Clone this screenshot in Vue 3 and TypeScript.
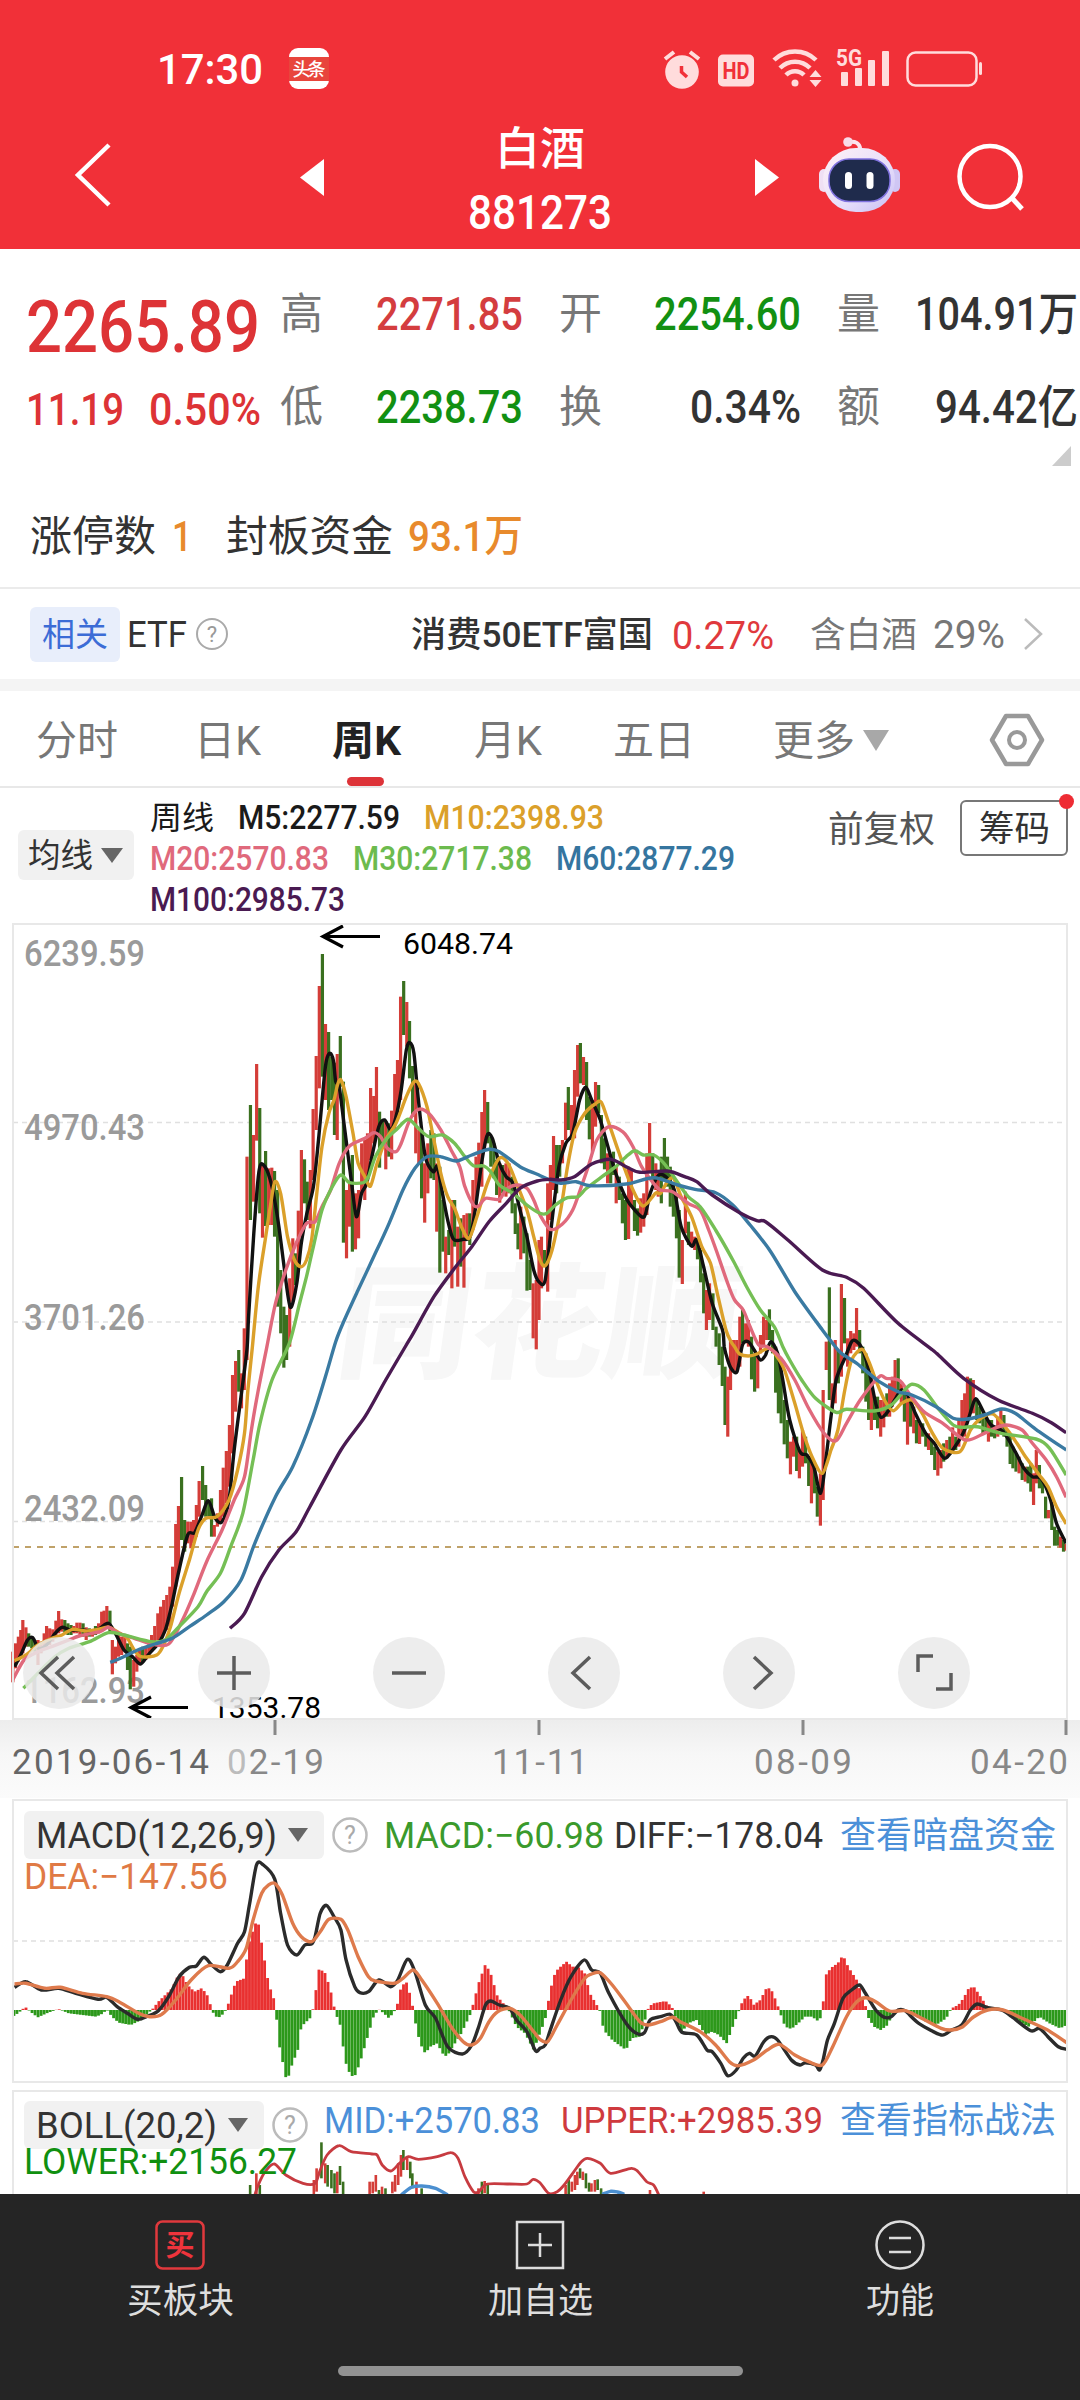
<script setup lang="ts">
/**
 * Sector quote page: header, quote summary, weekly K-line chart with
 * moving averages, MACD / BOLL sub charts and the bottom action bar.
 */
import { h } from 'vue'

interface FitProps {
  t: string
  w: number
  s: number
  b?: number
}

/* ── Single line of text condensed to a given width ────── */
const FitText = (p: FitProps) =>
  h('svg', { width: p.w, height: p.s, style: { overflow: 'visible', flex: 'none', display: 'block' } }, [
    h('text', {
      x: 0,
      y: p.s * 0.86,
      fill: 'currentColor',
      'font-size': p.s,
      'font-weight': p.b ?? 400,
      textLength: p.w,
      lengthAdjust: 'spacingAndGlyphs',
    }, p.t),
  ])
FitText.props = ['t', 'w', 's', 'b']

/* ── Chart data, stored per tile at roughly 3x density ─── */
type Pt = [number, number]
type Tile = [number, number]
const SX = 2.904
const SY = 3
const A: Tile = [0, 900]
const B: Tile = [540, 900]
const C: Tile = [0, 1340]
const D: Tile = [540, 1340]
const E: Tile = [0, 1780]
const F: Tile = [540, 1780]

function pts([ox, oy]: Tile, s: string): Pt[] {
  return s.trim().split(/\s+/).map((p) => {
    const [x, y] = p.split(',').map(Number)
    return [ox + x / SX, oy + y / SY]
  })
}

/* Catmull-Rom through all the points, as cubic segments */
function smooth(p: Pt[]): string {
  const f = (n: number) => n.toFixed(1)
  let d = `M${f(p[0][0])} ${f(p[0][1])}`
  for (let i = 0; i < p.length - 1; i++) {
    const a = p[i - 1] ?? p[i]
    const b = p[i]
    const c = p[i + 1]
    const e = p[i + 2] ?? c
    d += `C${f(b[0] + (c[0] - a[0]) / 7)} ${f(b[1] + (c[1] - a[1]) / 7)} ${f(c[0] - (e[0] - b[0]) / 7)} ${f(c[1] - (e[1] - b[1]) / 7)} ${f(c[0])} ${f(c[1])}`
  }
  return d
}

/* "x,high,low" with a trailing g for a falling week */
function bars([ox, oy]: Tile, s: string) {
  return s.trim().split(/\s+/).map((p) => {
    const [x, hi, lo] = p.replace('g', '').split(',').map(Number)
    return { x: ox + x / SX - 1.5, y: oy + hi / SY, h: (lo - hi) / SY, up: !p.endsWith('g') }
  })
}

const candles = [
  ...bars(C, `37,935,1027 45,910,985 53,890,965 60,870,950 66,840,940 75,862,920 83,880,920g 92,890,925g 101,900,935g 110,900,975 119,905,940 128,880,930 135,858,920
    144,865,915 153,868,905 162,842,890 170,813,880 179,838,875 188,840,878g 197,850,885g 206,855,885g 214,858,880 223,848,880 232,848,885 241,850,890g 250,862,900 259,865,890g
    268,870,890 277,858,885g 286,850,880 295,815,872 302,812,870 310,798,865 319,812,880g 326,900,1003 335,920,970 344,880,950 353,890,945 362,890,930 370,910,990g 378,920,1048g
    388,960,1040 397,945,995 405,930,970 414,920,968g 423,920,960 432,905,950 440,885,935 449,858,920 458,820,900 466,800,895 475,780,880 484,765,870 493,740,860 501,680,800
    510,552,740 518,498,700 527,411,600g 536,540,635g 545,545,610 554,545,625 562,540,610 570,495,590 578,423,530 588,378,480g 597,435,530g 606,480,530g 614,475,590g 622,555,590
    631,520,560 640,450,545 648,383,530 657,333,490 666,255,440 675,105,340 684,63,215 693,30,155g 701,100,205 709,-35,150`),
  ...bars(A, `717,770,1380 727,615,960g 736,705,905 745,492,722 754,624,940g 762,790,1013 771,753,978g 780,805,975 789,803,975 797,813,1010g 806,870,1220g 815,1110,1300g
    824,1220,1403g 832,1245,1380g 841,1135,1340 850,1015,1205 858,1060,1155g 866,932,1100 875,750,1000 884,778,910g 892,845,960g 901,810,985 909,627,840 918,468,690 927,258,565
    936,162,530g 945,372,600 954,396,630g 963,470,600g 971,488,705g 979,462,720 988,408,560g 997,545,1028g 1006,870,1075 1015,850,980 1023,765,1055g 1032,880,1048 1041,870,1015
    1050,730,880 1059,720,900 1067,700,830 1076,564,780 1085,588,730 1093,501,710 1102,635,803g 1111,660,740g 1120,665,808 1129,670,770g 1137,632,778 1146,522,690 1154,480,640
    1163,290,600 1172,243,405g 1181,306,440 1189,363,535g 1198,498,650g 1207,545,760 1216,690,790 1224,700,895g 1233,790,968 1242,730,880 1251,690,835g 1260,700,840g 1268,790,995
    1277,800,1118g 1286,900,1055g 1294,1010,1120 1303,990,1065g 1312,900,1165 1320,900,1040g 1329,980,1160 1338,955,1100g 1347,945,1163 1356,940,1020 1364,940,1035g 1373,840,990
    1382,770,920 1390,728,860 1399,636,860 1407,570,750 1416,606,730g 1425,710,800g 1434,730,835g 1442,780,885g 1451,790,908 1460,795,880g 1469,790,890 1478,790,880 1487,830,940g
    1496,910,1002g 1504,970,1048g 1512,920,1078 1521,950,1060g 1530,1000,1172g 1539,1080,1170g 1548,1150,1315 1557,1140,1348 1565,1020,1260`),
  ...bars(B, `4,1010,1165 13,1050,1100g 22,850,1175 30,795,960 39,708,870 48,735,880g 57,735,830g 65,720,790 74,608,720 82,561,690g 91,615,720 100,510,715 109,435,590 117,429,550g
    126,471,555 135,486,660g 143,590,718g 152,600,757 161,546,680 170,555,640g 178,645,790g 187,715,808g 196,760,850 205,775,850g 213,755,825g 221,800,910 230,830,900g 239,880,970g
    248,900,1020g 257,800,1017 265,810,920 274,900,993g 283,925,1007g 292,895,998 301,880,980 310,760,945 318,669,820 327,760,850g 336,790,870 343,815,890 352,770,910g 361,714,840g
    370,770,860g 378,800,920g 387,850,950g 396,880,1015g 404,930,1133g 413,1020,1152 422,875,1000 431,965,1035g 440,995,1040 449,1010,1050 457,1020,1078g 466,1050,1147g
    475,1120,1240g 483,1170,1290 492,1150,1260 502,1180,1290g 511,1280,1340g 520,1300,1395g 529,1340,1458g 537,1400,1575g 545,1430,1610 553,1320,1470 562,1320,1410 571,1320,1415
    580,1250,1400 588,1228,1330g 597,1270,1330 605,1260,1340 614,1310,1438g 623,1360,1475g 632,1360,1465 640,1305,1360 649,1250,1340 658,1260,1320 666,1228,1320g 675,1290,1360g
    684,1340,1478g 692,1380,1540g 700,1420,1570g 709,1500,1633g 718,1560,1675g 727,1625,1723 736,1610,1670 745,1610,1713g 753,1650,1735 762,1590,1700 771,1610,1690g 780,1670,1758g
    788,1690,1810 797,1700,1780g 805,1760,1850g 814,1720,1877 822,1470,1800 831,1325,1410 840,1162,1500g 848,1450,1530 857,1320,1510 866,1350,1450g 875,1152,1430 884,1194,1330g
    893,1315,1400 902,1293,1360 911,1300,1350 919,1224,1340 928,1290,1360g 937,1340,1420g 946,1360,1505g 954,1420,1560g 962,1430,1590 971,1490,1560g 980,1490,1585g 989,1500,1610
    998,1500,1582 1007,1480,1550g 1015,1450,1550 1023,1430,1520 1031,1380,1500 1040,1375,1470g 1049,1450,1510 1058,1470,1565g 1067,1490,1634 1076,1500,1580g 1085,1520,1600
    1093,1560,1630g 1102,1570,1632 1111,1570,1610g 1120,1600,1640g 1128,1600,1650 1137,1620,1665g 1146,1640,1710g 1155,1655,1727 1164,1650,1705 1172,1630,1685g 1181,1620,1675
    1190,1610,1650g 1198,1582,1650 1207,1610,1650g 1216,1560,1640 1225,1500,1620 1233,1480,1610 1241,1430,1570 1250,1435,1540g 1258,1440,1540 1268,1500,1560g 1277,1520,1570g
    1286,1540,1600g 1295,1550,1600g 1302,1560,1625 1311,1560,1610g 1320,1580,1615g 1329,1550,1610 1338,1525,1590 1347,1545,1610g 1356,1590,1640g 1365,1600,1692g 1373,1640,1705g
    1382,1660,1715g 1391,1670,1720 1400,1690,1740g 1409,1700,1745 1417,1700,1750g 1425,1690,1775g 1433,1720,1815 1441,1650,1750 1450,1695,1765g 1459,1740,1780g 1468,1790,1855g
    1476,1830,1855 1486,1810,1890g 1494,1880,1937g 1503,1890,1937g 1511,1910,1943 1520,1920,1955g 1528,1932,1952`),
]

const averages = [
  {
    color: '#111111',
    d: smooth([
      ...pts(C, '42,980 60,945 80,900 95,893 112,925 135,915 160,880 180,862 205,870 240,870 265,875 290,865 315,850 335,880 360,930 385,950 408,972 430,945 460,910 480,870 500,790 520,690 545,585 565,578 585,530 605,482 625,535 645,545 665,480 680,330 700,170 717,30'),
      ...pts(A, '722,1250 737,1000 750,830 758,792 775,810 792,870 810,980 825,1100 843,1222 862,1150 875,1030 890,945 910,860 925,720 945,500 957,460 968,480 975,545 985,560 1000,680 1020,840 1035,950 1050,880 1065,850 1080,770 1100,680 1117,660 1135,690 1150,650 1165,570 1180,450 1190,428 1202,460 1215,600 1235,770 1258,815 1270,800 1285,880 1300,960 1317,1018 1345,1018 1365,1010 1380,930 1400,780 1415,705 1430,715 1450,790 1470,830 1490,850 1510,930 1530,1010 1550,1110 1565,1145'),
      ...pts(B, '15,1140 35,960 55,800 75,730 95,700 115,600 133,562 150,600 175,660 200,750 220,820 250,895 275,930 303,950 320,880 345,825 370,835 390,870 410,980 440,1038 455,1020 475,1100 500,1210 530,1290 535,1340'),
      ...pts(D, '545,60 555,85 572,95 588,15 605,5 622,30 640,60 655,45 670,5 690,40 705,120 725,240 755,335 775,345 795,380 815,460 830,360 845,230 860,120 885,55 905,5 918,3 935,25 955,90 975,190 990,232 1010,215 1030,180 1050,150 1070,170 1090,220 1120,280 1145,310 1175,355 1205,320 1235,265 1260,185 1270,180 1290,220 1310,255 1345,275 1380,335 1405,385 1430,410 1455,415 1480,470 1500,550 1528,610'),
    ]),
  },
  {
    color: '#dba02a',
    d: smooth([
      ...pts(C, '42,962 75,945 110,915 150,895 180,885 210,868 250,873 285,868 315,862 345,878 370,895 390,930 410,950 455,945 475,915 495,860 520,760 550,660 575,570 597,535 630,530 665,480 690,390 710,280 720,150 733,20'),
      ...pts(A, '750,1160 770,1020 785,920 798,845 815,880 835,1010 855,1080 875,1100 890,1080 905,1020 920,880 935,740 955,640 970,600 980,555 990,540 1005,590 1025,700 1040,790 1060,830 1076,858 1095,790 1120,720 1150,670 1180,590 1200,548 1215,550 1240,620 1260,720 1280,820 1300,890 1320,925 1340,980 1362,1015 1385,950 1415,850 1450,775 1475,790 1500,850 1530,930 1550,1010'),
      ...pts(B, '0,1080 15,1097 35,1050 60,930 80,800 100,700 130,640 160,612 178,607 200,670 230,760 270,870 300,918 335,880 350,880 370,845 388,835 410,890 440,950 470,1040 495,1090 515,1180 540,1290 555,1325'),
      ...pts(D, '565,20 580,42 605,48 630,42 650,30 668,25 685,45 710,90 740,190 765,280 790,350 820,400 845,330 865,270 885,150 905,60 935,28 955,65 975,120 1000,180 1025,212 1050,190 1080,180 1110,220 1140,280 1170,325 1220,335 1250,270 1280,235 1315,222 1350,260 1385,310 1410,350 1450,405 1475,440 1500,500 1528,552'),
    ]),
  },
  {
    color: '#e0697c',
    d: smooth([
      ...pts(C, '37,1020 70,960 110,935 150,920 200,900 230,888 290,875 315,862 345,880 390,895 440,912 490,912 530,840 560,770 600,665 645,570 680,480 710,410 730,270 750,150 775,20'),
      ...pts(A, '800,1210 830,1110 860,1030 890,970 915,965 935,920 960,870 985,790 1015,738 1060,715 1085,698 1105,710 1125,745 1150,755 1165,730 1190,660 1215,628 1245,640 1280,690 1310,750 1335,800 1350,860 1375,915 1390,918 1410,895 1450,898 1470,868 1500,855 1530,865 1550,900'),
      ...pts(B, '0,945 30,988 65,972 95,930 120,860 140,800 165,720 200,680 240,695 270,740 295,800 330,850 350,870 385,875 430,910 465,930 490,990 515,1060 545,1150 565,1200 590,1230 610,1280 635,1335'),
      ...pts(D, '660,20 700,55 740,120 780,205 825,280 860,302 890,250 930,180 985,110 1005,115 1045,122 1075,165 1115,215 1170,250 1235,300 1290,280 1320,265 1355,255 1400,270 1430,310 1470,360 1500,410 1528,472'),
    ]),
  },
  {
    color: '#75bf55',
    d: smooth([
      ...pts(C, '68,1045 110,1000 160,950 200,925 260,905 315,878 360,885 440,905 480,900 520,860 575,800 600,755 640,700 670,620 705,520 735,360 755,250 790,120 840,10'),
      ...pts(A, '870,1210 890,1130 910,1040 935,930 965,860 990,825 1015,848 1055,848 1070,830 1090,770 1120,720 1150,690 1185,658 1215,685 1245,710 1285,705 1320,730 1350,770 1375,797 1405,798 1425,815 1450,855 1490,880 1530,915'),
      ...pts(B, '0,940 20,940 45,915 80,893 110,890 135,865 180,830 220,800 250,770 275,752 300,765 330,765 360,790 395,840 430,890 465,920 510,990 560,1080 600,1160 640,1230 680,1280 705,1340'),
      ...pts(D, '725,60 760,120 800,175 860,217 890,208 970,213 1020,195 1055,155 1080,133 1115,150 1160,210 1200,255 1225,262 1270,260 1340,280 1440,297 1480,325 1528,405'),
    ]),
  },
  {
    color: '#3a7aa2',
    d: smooth([
      ...pts(C, '320,967 350,955 400,930 450,912 500,895 550,860 600,825 650,785 700,720 740,610 800,470 850,380 905,240 945,110 975,5'),
      ...pts(A, '1000,1260 1040,1170 1090,1060 1130,970 1170,870 1205,805 1240,770 1280,770 1325,783 1370,765 1420,748 1450,755 1510,800 1560,823'),
      ...pts(B, '30,840 60,850 105,845 145,857 250,852 330,833 400,855 450,868 510,878 560,915 610,975 670,1055 740,1175 820,1290 850,1330'),
      ...pts(D, '875,40 920,70 985,125 1040,155 1080,165 1150,200 1200,235 1235,238 1290,225 1340,207 1380,220 1440,268 1528,330'),
    ]),
  },
  {
    color: '#4a1a52',
    d: smooth([
      ...pts(C, '668,865 710,820 760,710 810,630 860,575 900,500 990,330 1060,230 1120,120 1180,15'),
      ...pts(A, '1200,1300 1260,1190 1320,1105 1370,1040 1420,965 1470,910 1510,865 1560,843'),
      ...pts(B, '30,838 60,840 100,830 150,792 205,778 250,800 290,817 370,813 420,830 455,845 500,885 580,938 630,962 655,965 720,1020 820,1110 890,1132 940,1165 1040,1270 1140,1350'),
      ...pts(D, '1160,48 1230,115 1330,180 1430,220 1480,245 1528,278'),
    ]),
  },
]

/* ── MACD ──────────────────────────────────────────────── */
const ZERO = 2010
const hist = [
  ...pts(E, '37,-20 55,-8 66,3 75,8 88,-5 110,-22 140,-8 170,3 200,-10 240,-15 280,-20 300,-10 310,2 325,-20 345,-38 380,-45 410,-30 435,-5 445,5 460,25 480,45 500,65 520,110 530,105 545,75 565,55 585,65 600,50 610,20 617,-5 632,-25 645,-15 658,2 670,40 685,85 710,95 720,190 735,240 748,275 765,170 780,80 795,35 803,-20 808,-90 820,-150 833,-217 848,-165 865,-120 875,-50 905,-20 912,20 927,125 945,110 960,60 968,20 975,-10 990,-50 1000,-140 1010,-180 1028,-205 1045,-160 1065,-90 1085,-20 1100,2 1115,-10 1130,-25 1145,-5 1155,20 1165,70 1180,85 1190,50 1200,5 1207,-40 1220,-100 1235,-130 1250,-110 1270,-100 1285,-130 1298,-140 1315,-110 1340,-70 1365,-15 1375,20 1390,80 1410,138 1425,110 1445,40 1470,10 1480,-5 1500,-50 1525,-70 1550,-120'),
  ...pts(F, '0,-70 15,-30 22,10 30,60 45,115 60,130 77,145 95,130 110,130 130,110 145,50 165,15 175,-5 185,-60 210,-90 250,-120 265,-85 290,-80 308,-20 316,10 330,20 365,27 383,10 390,-10 410,-70 430,-40 455,-30 480,-75 500,-65 520,-75 542,-100 560,-50 575,-10 582,10 590,30 607,45 620,15 640,30 660,70 675,55 690,15 698,-10 712,-50 730,-57 750,-40 770,-20 790,-20 810,-35 820,-10 824,40 832,110 850,130 865,140 880,165 895,130 920,90 945,15 952,-20 970,-50 990,-60 1010,-45 1025,-10 1040,5 1060,-5 1090,-15 1120,-35 1150,-45 1180,-25 1195,5 1215,15 1230,35 1245,65 1260,70 1280,40 1300,8 1320,3 1340,2 1355,-10 1380,-30 1420,-50 1450,-20 1480,-40 1510,-55 1530,-45'),
].map(([x, y]) => [x, y - 1780] as Pt)

const macdBars: { x: number; v: number }[] = []
for (let x = 14; x < 1066; x += 3.02) {
  const i = hist.findIndex((p) => p[0] >= x)
  if (i < 0) break
  const b = hist[i]
  const a = hist[i - 1] ?? b
  const k = b[0] === a[0] ? 0 : (x - a[0]) / (b[0] - a[0])
  macdBars.push({ x, v: a[1] + (b[1] - a[1]) * k })
}

const diffLine = smooth([
  ...pts(E, '42,622 75,605 120,630 170,625 220,640 285,658 310,652 340,680 370,700 400,718 430,708 460,692 490,650 520,590 550,562 570,558 592,532 615,555 640,575 660,555 690,490 710,455 725,370 745,255 765,255 798,298 815,400 835,495 862,525 885,495 905,492 915,470 930,400 948,376 970,410 990,450 1005,540 1030,620 1045,638 1070,635 1100,600 1135,620 1155,600 1183,538 1205,575 1235,675 1265,715 1300,800 1343,822 1370,795 1390,740 1410,675 1425,663 1450,675 1480,685 1500,720 1530,755 1555,812'),
  ...pts(F, '0,805 15,795 30,750 60,660 90,590 128,540 150,570 175,580 200,640 250,730 280,760 303,758 320,720 350,710 378,703 395,725 412,757 455,765 485,810 500,815 525,850 545,887 570,870 590,835 608,820 625,828 650,785 670,770 690,780 730,840 755,855 770,848 800,855 812,870 822,840 835,780 855,730 880,655 905,630 928,615 945,640 975,690 1000,712 1020,710 1040,690 1060,692 1100,730 1165,765 1195,750 1225,735 1250,690 1270,672 1300,683 1340,690 1370,710 1425,752 1450,745 1475,770 1505,800 1530,808'),
])
const deaLine = smooth([
  ...pts(E, '42,612 75,610 130,625 175,622 240,640 310,650 350,668 400,698 435,710 470,703 510,660 555,600 605,557 665,565 690,545 715,505 735,420 760,340 780,315 798,310 820,345 850,430 875,470 905,485 930,455 955,418 990,418 1010,450 1040,530 1070,590 1090,603 1145,610 1170,595 1200,570 1225,600 1270,670 1310,740 1345,785 1370,795 1395,775 1420,725 1445,695 1480,685 1510,705 1550,755'),
  ...pts(F, '0,778 22,785 50,735 90,660 130,595 150,582 175,578 210,615 250,670 290,725 315,735 350,725 385,712 410,727 465,755 510,795 550,845 575,857 620,840 660,810 695,793 740,825 780,845 820,855 850,800 890,710 920,665 945,653 975,665 1015,693 1060,692 1100,710 1165,745 1195,750 1225,742 1260,710 1300,690 1345,690 1400,715 1470,748 1530,788'),
])

/* ── BOLL ──────────────────────────────────────────────── */
const bollUpper = smooth([
  ...pts(E, '740,1245 750,1215 770,1175 797,1152 830,1185 880,1210 915,1210 930,1170 950,1125 985,1097 1020,1115 1080,1122 1095,1125 1110,1155 1135,1173 1160,1150 1185,1130 1215,1138 1270,1130 1310,1118 1330,1135 1350,1190 1375,1235 1390,1235 1415,1212 1480,1212 1530,1212 1548,1198'),
  ...pts(F, '0,1208 25,1240 50,1235 70,1215 95,1180 120,1145 138,1135 175,1150 205,1180 265,1165 285,1175 310,1205 330,1215 345,1245'),
])
const bollMid = [
  smooth(pts(E, '1165,1245 1195,1222 1225,1218 1265,1225 1300,1245')),
  smooth(pts(F, '180,1243 205,1234 225,1236 245,1243')),
]
const bollBars = [
  ...bars(E, `727,1215,1245g 745,1180,1245 755,1215,1245g 912,1200,1245 920,1165,1235 934,1087,1195g 945,1150,1210 952,1155,1220g 963,1170,1225g 972,1180,1240g 980,1175,1240
    988,1158,1215g 997,1205,1245g 1074,1205,1245 1083,1205,1240 1092,1185,1235 1101,1230,1245g 1110,1220,1245 1120,1225,1245g 1140,1205,1240 1148,1185,1235 1157,1150,1215
    1165,1125,1190 1172,1110,1170g 1183,1130,1170 1192,1145,1195g 1198,1180,1225g 1210,1205,1245 1225,1225,1245g 1390,1225,1245 1400,1205,1245g 1408,1203,1240 1417,1215,1245g`),
  ...bars(F, `75,1215,1245 84,1200,1245g 93,1205,1235 102,1185,1230 109,1175,1215 117,1165,1195g 125,1175,1200 134,1180,1225g 143,1208,1235g 150,1210,1235 160,1200,1235 168,1198,1230g 178,1225,1245g 320,1230,1245 476,1235,1245`),
]

/* ── Static rows ───────────────────────────────────────── */
const quotes = [
  { label: '高', value: '2271.85', w: 147, tone: 'up' },
  { label: '开', value: '2254.60', w: 147, tone: 'down' },
  { label: '量', value: '104.91万', w: 163, tone: 'flat' },
  { label: '低', value: '2238.73', w: 147, tone: 'down' },
  { label: '换', value: '0.34%', w: 111, tone: 'flat' },
  { label: '额', value: '94.42亿', w: 143, tone: 'flat' },
]
const yLabels = [
  { t: '6239.59', y: 966 },
  { t: '4970.43', y: 1140 },
  { t: '3701.26', y: 1330 },
  { t: '2432.09', y: 1521 },
  { t: '1162.93', y: 1703 },
]
const tools = [
  'M35 20L18 36L35 52M51 20L34 36L51 52',
  'M36 19V53M19 36H53',
  'M19 36H53',
  'M42 20L25 36L42 52',
  'M31 20L48 36L31 52',
  'M20 35V19H35M53 36V52H38',
]
</script>

<template>
  <div class="page">
    <header class="top">
      <div class="status">
        <FitText t="17:30" :w="106" :s="42" :b="500" />
        <svg class="app-icon" width="40" height="41" viewBox="0 0 40 41">
          <rect width="40" height="41" rx="9" fill="#fff" />
          <rect y="9" width="40" height="24" fill="#e8453c" />
          <text x="20" y="28" font-size="18" font-weight="500" fill="#fff" text-anchor="middle" textLength="33">头条</text>
        </svg>
        <svg class="status-icons" width="320" height="44" viewBox="662 47 320 44">
          <g fill="#ffdcdc">
            <circle cx="682" cy="72" r="16.800" />
            <path d="M665 59L674 52M699 59L690 52" stroke="#ffdcdc" stroke-width="4" />
            <path d="M681.500 66V72L687 77" fill="none" stroke="#f13038" stroke-width="3.500" />
            <rect x="718" y="54.500" width="36" height="32" rx="5" />
            <text x="736" y="79" font-size="23" font-weight="700" fill="#f13038" text-anchor="middle" textLength="27" lengthAdjust="spacingAndGlyphs">HD</text>
            <circle cx="795" cy="83" r="3.500" />
            <path d="M815.500 70L821.500 77H809.500ZM815.500 87L821.500 80H809.500Z" />
            <rect x="841" y="72" width="7" height="14" rx="1" />
            <rect x="855" y="68" width="7" height="18" rx="1" />
            <rect x="868" y="60" width="7" height="26" rx="1" />
            <rect x="882" y="51" width="7" height="35" rx="1" />
            <text x="836" y="66" font-size="23" font-weight="700" textLength="26" lengthAdjust="spacingAndGlyphs">5G</text>
            <rect x="979" y="62" width="3" height="13" rx="1.500" />
          </g>
          <g fill="none" stroke="#ffdcdc" stroke-width="4.500">
            <path d="M774 60A30 30 0 0 1 816 60" />
            <path d="M780 68A21 21 0 0 1 810 68" />
            <path d="M786 75A12.500 12.500 0 0 1 804 75" />
            <rect x="907.500" y="52.500" width="69" height="33" rx="8" stroke-width="2.500" />
          </g>
        </svg>
      </div>
      <div class="nav">
        <svg width="40" height="66" viewBox="0 0 40 66"><path d="M36 3L5 33L36 63" fill="none" stroke="#fff" stroke-width="4.500" /></svg>
        <svg class="prev" width="24" height="38" viewBox="0 0 24 38"><path d="M24 0V37L0 18.500Z" fill="#fff" /></svg>
        <div class="title">
          <FitText t="白酒" :w="90" :s="45" :b="500" />
          <FitText t="881273" :w="144" :s="48" :b="500" />
        </div>
        <svg class="next" width="24" height="38" viewBox="0 0 24 38"><path d="M0 0V37L24 18.500Z" fill="#fff" /></svg>
        <svg class="robot" width="84" height="78" viewBox="0 0 84 78">
          <defs>
            <linearGradient id="shell" x1="0" y1="0" x2="1" y2="1">
              <stop offset="0" stop-color="#fff2f6" />
              <stop offset="0.6" stop-color="#e6defa" />
              <stop offset="1" stop-color="#c6bdf4" />
            </linearGradient>
          </defs>
          <path d="M42 14C42 8 37 6 31 7" fill="none" stroke="#fbe4ee" stroke-width="4" stroke-linecap="round" />
          <circle cx="30" cy="7" r="4.800" fill="#f8dce8" />
          <rect x="1" y="34" width="10" height="23" rx="5" fill="#efe0f4" />
          <rect x="72" y="34" width="10" height="23" rx="5" fill="#cfc6f4" />
          <rect x="5" y="13" width="72" height="64" rx="33" fill="url(#shell)" />
          <rect x="11" y="24" width="61" height="42.500" rx="20" fill="#1f2b4c" stroke="#8173e0" stroke-width="1.500" />
          <rect x="27" y="37" width="7" height="17" rx="3.500" fill="#fff" />
          <rect x="48.500" y="37" width="7" height="17" rx="3.500" fill="#fff" />
        </svg>
        <svg class="search" width="72" height="74" viewBox="0 0 72 74">
          <circle cx="33" cy="38.500" r="30.500" fill="none" stroke="#fff" stroke-width="4.500" />
          <path d="M55 60L65 71" stroke="#fff" stroke-width="5" />
        </svg>
      </div>
    </header>

    <section class="quote">
      <div class="last">
        <FitText t="2265.89" :w="234" :s="73" :b="500" />
        <div class="change">
          <FitText t="11.19" :w="98" :s="45" :b="500" />
          <FitText t="0.50%" :w="112" :s="45" :b="500" />
        </div>
      </div>
      <div class="quote-grid">
        <div v-for="q in quotes" :key="q.label" class="cell">
          <FitText class="label" :t="q.label" :w="43" :s="43" />
          <FitText :class="q.tone" :t="q.value" :w="q.w" :s="46" :b="500" />
        </div>
      </div>
    </section>
    <div class="corner">
      <svg width="19" height="20" viewBox="0 0 19 20"><path d="M19 0V20H0Z" fill="#ccc" /></svg>
    </div>
    <div class="limit">
      <FitText t="涨停数" :w="126" :s="42" />
      <FitText class="orange one" t="1" :w="20" :s="43" :b="500" />
      <FitText class="fund" t="封板资金" :w="167" :s="42" />
      <FitText class="orange amount" t="93.1万" :w="115" :s="43" :b="500" />
    </div>

    <div class="etf">
      <span class="badge"><FitText t="相关" :w="66" :s="33" /></span>
      <FitText t="ETF" :w="60" :s="36" />
      <svg class="help" width="34" height="34" viewBox="0 0 34 34">
        <circle cx="17" cy="17" r="15" fill="none" stroke="#aaa" stroke-width="2" />
        <text x="17" y="25" font-size="22" fill="#999" text-anchor="middle">?</text>
      </svg>
      <FitText class="etf-name" t="消费50ETF富国" :w="242" :s="35" :b="500" />
      <FitText class="etf-rate" t="0.27%" :w="102" :s="39" />
      <FitText class="grey part" t="含白酒" :w="107" :s="35" />
      <FitText class="grey share" t="29%" :w="72" :s="38" />
      <svg class="more" width="20" height="34" viewBox="0 0 20 34"><path d="M2 2L18 17L2 32" fill="none" stroke="#bbb" stroke-width="2.500" /></svg>
    </div>

    <nav class="tabs">
      <FitText t="分时" :w="82" :s="41" />
      <FitText class="t2" t="日K" :w="67" :s="41" />
      <span class="active">
        <FitText t="周K" :w="69" :s="41" :b="700" />
        <i />
      </span>
      <FitText class="t4" t="月K" :w="68" :s="41" />
      <FitText class="t5" t="五日" :w="82" :s="41" />
      <FitText class="t6" t="更多" :w="82" :s="41" />
      <svg class="t7" width="26" height="22" viewBox="0 0 26 22"><path d="M0 1H26L13 22Z" fill="#a8a8a8" /></svg>
      <svg class="hex" width="56" height="54" viewBox="0 0 56 54">
        <path d="M17 3H39L53 27L39 51H17L3 27Z" fill="none" stroke="#999" stroke-width="4.500" stroke-linejoin="round" />
        <circle cx="28" cy="27" r="8" fill="none" stroke="#999" stroke-width="4" />
      </svg>
    </nav>

    <div class="ma">
      <span class="select">
        <FitText t="均线" :w="65" :s="33" />
        <svg width="22" height="15" viewBox="0 0 22 15"><path d="M0 0H22L11 15Z" fill="#666" /></svg>
      </span>
      <div class="legend">
        <div>
          <FitText class="dark" t="周线" :w="64" :s="32" />
          <FitText class="m5" t="M5:2277.59" :w="162" :s="33" :b="500" />
          <FitText class="m10" t="M10:2398.93" :w="180" :s="33" :b="500" />
        </div>
        <div>
          <FitText class="m20" t="M20:2570.83" :w="179" :s="33" :b="500" />
          <FitText class="m30" t="M30:2717.38" :w="179" :s="33" :b="500" />
          <FitText class="m60" t="M60:2877.29" :w="179" :s="33" :b="500" />
        </div>
        <div>
          <FitText class="m100" t="M100:2985.73" :w="195" :s="33" :b="500" />
        </div>
      </div>
      <FitText class="adjust" t="前复权" :w="107" :s="36" />
      <span class="chips"><FitText t="筹码" :w="71" :s="35" /><i /></span>
    </div>

    <div class="kline">
      <svg width="1080" height="799" viewBox="0 922 1080 799">
        <text class="mark" x="0" y="0" transform="translate(333 1368) skewX(-8)" textLength="400" lengthAdjust="spacingAndGlyphs">同花顺</text>
        <path d="M13 1122.500H1067M13 1322H1067M13 1521.500H1067" stroke="#e0e0e0" stroke-width="1.500" stroke-dasharray="5 4" />
        <path d="M13 1547H1067" stroke="#c0a269" stroke-width="2" stroke-dasharray="6 6" />
        <text v-for="l in yLabels" :key="l.t" class="axis" x="24" :y="l.y" textLength="121" lengthAdjust="spacingAndGlyphs">{{ l.t }}</text>
        <rect v-for="(c, i) in candles" :key="i" :x="c.x" :y="c.y" width="3.200" :height="c.h" :fill="c.up ? '#d43d38' : '#3a701f'" />
        <path v-for="m in averages" :key="m.color" :d="m.d" :stroke="m.color" class="line" />
        <g class="pointer">
          <path d="M380 936.500H323M343 926L323 936.500L343 947M188 1707.500H131M151 1697L131 1707.500L151 1718" />
          <text x="403" y="954" textLength="110" lengthAdjust="spacingAndGlyphs">6048.74</text>
          <text x="212" y="1718" textLength="109" lengthAdjust="spacingAndGlyphs">1353.78</text>
        </g>
        <rect x="13" y="924" width="1054" height="795" fill="none" stroke="#e8e8e8" stroke-width="2" />
      </svg>
      <div class="tools">
        <svg v-for="d in tools" :key="d" width="72" height="72" viewBox="0 0 72 72"><path :d="d" /></svg>
      </div>
    </div>

    <div class="dates">
      <svg width="1080" height="78" viewBox="0 1721 1080 78">
        <path d="M275 1721V1736M539 1721V1736M803 1721V1736M1066 1721V1736" stroke="#888" stroke-width="3" />
        <text x="12" y="1775" textLength="197" class="first">2019-06-14</text>
        <text x="227" y="1775" textLength="97"><tspan class="faded">0</tspan>2-19</text>
        <text x="492" y="1775" textLength="96">11-11</text>
        <text x="754" y="1775" textLength="98">08-09</text>
        <text x="970" y="1775" textLength="98">04-20</text>
      </svg>
    </div>

    <section class="sub macd">
      <svg class="plot" width="1080" height="286" viewBox="0 1798 1080 286">
        <path d="M13 1941H1067" stroke="#e0e0e0" stroke-width="1.500" stroke-dasharray="5 4" />
        <rect
          v-for="b in macdBars" :key="b.x" :x="b.x - 1.5" :y="b.v > 0 ? ZERO - b.v : ZERO" width="2.850"
          :height="Math.abs(b.v)" :fill="b.v > 0 ? '#e93030' : '#2c981a'"
        />
        <path :d="diffLine" class="line" stroke="#2b2b2b" />
        <path :d="deaLine" class="line" stroke="#de7a4c" />
        <rect x="13" y="1800" width="1054" height="282" fill="none" stroke="#e8e8e8" stroke-width="2" />
      </svg>
      <div class="row">
        <span class="select">
          <FitText t="MACD(12,26,9)" :w="241" :s="36" />
          <svg width="20" height="14" viewBox="0 0 20 14"><path d="M0 0H20L10 14Z" fill="#666" /></svg>
        </span>
        <svg class="help" width="36" height="36" viewBox="0 0 36 36">
          <circle cx="18" cy="18" r="16.500" fill="none" stroke="#bbb" stroke-width="2.500" />
          <text x="18" y="27" font-size="25" fill="#aaa" text-anchor="middle">?</text>
        </svg>
        <FitText class="macd-v" t="MACD:−60.98" :w="220" :s="36" />
        <FitText class="diff-v" t="DIFF:−178.04" :w="209" :s="36" />
        <FitText class="link" t="查看暗盘资金" :w="216" :s="36" />
      </div>
      <FitText class="second dea" t="DEA:−147.56" :w="204" :s="36" />
    </section>

    <section class="sub boll">
      <svg class="plot" width="1080" height="105" viewBox="0 2089 1080 105">
        <rect v-for="(c, i) in bollBars" :key="i" :x="c.x" :y="c.y" width="2.600" :height="c.h" :fill="c.up ? '#d43d38' : '#3a701f'" />
        <path v-for="d in bollMid" :key="d" :d="d" class="line" stroke="#4b8fd0" />
        <path :d="bollUpper" class="line thin" stroke="#c73b40" />
        <path d="M13 2200V2091H1067V2200" fill="none" stroke="#e8e8e8" stroke-width="2" />
      </svg>
      <div class="row">
        <span class="select">
          <FitText t="BOLL(20,2)" :w="181" :s="36" />
          <svg width="20" height="14" viewBox="0 0 20 14"><path d="M0 0H20L10 14Z" fill="#666" /></svg>
        </span>
        <svg class="help" width="36" height="36" viewBox="0 0 36 36">
          <circle cx="18" cy="18" r="16.500" fill="none" stroke="#bbb" stroke-width="2.500" />
          <text x="18" y="27" font-size="25" fill="#aaa" text-anchor="middle">?</text>
        </svg>
        <FitText class="mid-v" t="MID:+2570.83" :w="216" :s="36" />
        <FitText class="upper-v" t="UPPER:+2985.39" :w="262" :s="36" />
        <FitText class="link" t="查看指标战法" :w="216" :s="36" />
      </div>
      <FitText class="second lower" t="LOWER:+2156.27" :w="273" :s="36" />
    </section>

    <footer class="bottom">
      <div class="actions">
        <div class="action">
          <svg width="50" height="50" viewBox="0 0 50 50">
            <rect x="1.500" y="1.500" width="47" height="47" rx="6" fill="none" stroke="#e0393d" stroke-width="2.500" />
            <text x="25" y="36" font-size="29" font-weight="700" fill="#ee343c" text-anchor="middle">买</text>
          </svg>
          <FitText t="买板块" :w="107" :s="35" />
        </div>
        <div class="action">
          <svg width="50" height="50" viewBox="0 0 50 50" fill="none" stroke="#ddd" stroke-width="2.500">
            <path d="M2 2H48V48H2ZM25 13V37M13 25H37" />
          </svg>
          <FitText t="加自选" :w="105" :s="35" />
        </div>
        <div class="action">
          <svg width="50" height="50" viewBox="0 0 50 50" fill="none" stroke="#ddd" stroke-width="2.500">
            <circle cx="25" cy="25" r="23.500" />
            <path d="M14 18H36M14 32H36" />
          </svg>
          <FitText t="功能" :w="68" :s="35" />
        </div>
      </div>
      <div class="home" />
    </footer>
  </div>
</template>

<style>
body {
  margin: 0;
  background: #fff;
}
</style>

<style scoped>
.page {
  width: 1080px;
  height: 2400px;
  overflow: hidden;
  background: #fff;
  color: #333;
  font-family: Roboto, "Noto Sans CJK SC", sans-serif;
}
svg {
  display: block;
  flex: none;
}

/* header */
.top {
  height: 249px;
  background: #f13038;
  color: #fff;
}
.status {
  display: flex;
  align-items: center;
  box-sizing: border-box;
  height: 90px;
  padding: 47px 0 0 157px;
}
.app-icon {
  margin-left: 26px;
}
.status-icons {
  margin-left: 333px;
}
.nav {
  display: flex;
  align-items: center;
  height: 158px;
  padding-left: 73px;
}
.nav > svg {
  margin-top: 12px;
}
.nav .prev {
  margin: 18px 0 0 187px;
}
.title {
  display: flex;
  flex-direction: column;
  align-items: center;
  gap: 17px;
  width: 146px;
  margin: 24px 1px 0 143px;
}
.nav .next {
  margin: 18px 0 0 141px;
}
.nav .robot {
  margin: 9px 0 0 39px;
}
.nav .search {
  margin: 11px 0 0 55px;
}

/* quote */
.quote {
  display: flex;
  height: 197px;
}
.last {
  display: flex;
  flex-direction: column;
  gap: 24px;
  width: 254px;
  padding: 40px 0 0 26px;
  color: #dd3336;
}
.change {
  display: flex;
  justify-content: space-between;
  width: 235px;
}
.quote-grid {
  display: grid;
  grid-template-columns: 243px 242px 241px;
  grid-template-rows: 46px 46px;
  column-gap: 36px;
  row-gap: 47px;
  padding-top: 41px;
}
.cell {
  display: flex;
  align-items: center;
  justify-content: space-between;
}
.label {
  color: #777;
}
.up {
  color: #d43d3f;
}
.down {
  color: #129012;
}
.corner {
  display: flex;
  justify-content: flex-end;
  height: 20px;
  padding-right: 9px;
}
.limit {
  display: flex;
  align-items: center;
  box-sizing: border-box;
  height: 123px;
  padding: 18px 0 0 30px;
  border-bottom: 2px solid #ebebeb;
}
.orange {
  color: #e88a2c;
}
.one {
  margin-left: 16px;
}
.fund {
  margin-left: 34px;
}
.amount {
  margin-left: 15px;
}

/* etf */
.etf {
  display: flex;
  align-items: center;
  height: 90px;
  padding-left: 30px;
  border-bottom: 12px solid #f4f4f4;
}
.badge {
  display: flex;
  align-items: center;
  justify-content: center;
  width: 90px;
  height: 55px;
  margin-right: 7px;
  border-radius: 6px;
  background: #e8eefb;
  color: #3c6cd6;
}
.etf .help {
  margin-left: 8px;
}
.etf-name {
  margin-left: 182px;
}
.etf-rate {
  margin-left: 19px;
  color: #e0393d;
}
.grey {
  color: #777;
}
.part {
  margin-left: 36px;
}
.share {
  margin-left: 16px;
}
.more {
  margin-left: 18px;
}

/* tabs */
.tabs {
  display: flex;
  align-items: center;
  height: 95px;
  padding-left: 36px;
  border-bottom: 2px solid #e8e8e8;
  color: #777;
}
.tabs > * {
  margin-top: 3px;
}
.t2 {
  margin-left: 76px;
}
.active {
  position: relative;
  margin-left: 71px;
  color: #222;
}
.active i {
  position: absolute;
  left: 15px;
  top: 57px;
  width: 37px;
  height: 9px;
  border-radius: 5px;
  background: #dd3338;
}
.t4 {
  margin-left: 73px;
}
.t5 {
  margin-left: 71px;
}
.t6 {
  margin-left: 78px;
}
.t7 {
  margin-left: 8px;
}
.hex {
  margin-left: 100px;
}

/* moving averages */
.ma {
  display: flex;
  height: 134px;
}
.select {
  display: flex;
  align-items: center;
  justify-content: space-between;
  box-sizing: border-box;
  border-radius: 6px;
  background: #f1f1f1;
}
.ma .select {
  width: 116px;
  height: 50px;
  margin: 42px 0 0 18px;
  padding: 0 11px 0 10px;
}
.legend {
  display: flex;
  flex-direction: column;
  gap: 8px;
  width: 585px;
  margin: 13px 0 0 16px;
}
.legend > div {
  display: flex;
  gap: 24px;
}
.dark,
.m5 {
  color: #1a1a1a;
}
.m10 {
  color: #dba02a;
}
.m20 {
  color: #e0697c;
}
.m30 {
  color: #6cbb4e;
}
.m60 {
  color: #35759f;
}
.m100 {
  color: #4a1a52;
}
.adjust {
  margin: 23px 0 0 93px;
  color: #555;
}
.chips {
  position: relative;
  display: flex;
  align-items: center;
  justify-content: center;
  box-sizing: border-box;
  width: 108px;
  height: 56px;
  margin: 12px 0 0 25px;
  border: 2px solid #777;
  border-radius: 6px;
}
.chips i {
  position: absolute;
  top: -8px;
  right: -8px;
  width: 15px;
  height: 15px;
  border-radius: 50%;
  background: #ee2c34;
}

/* k-line */
.kline {
  position: relative;
  height: 798px;
}
.line {
  fill: none;
  stroke-width: 3.4;
  stroke-linejoin: round;
}
.thin {
  stroke-width: 2.8;
}
.mark {
  font-size: 124px;
  font-weight: 900;
  fill: #f7f7f7;
}
.axis {
  font-size: 37px;
  font-weight: 500;
  fill: #9a9a9a;
}
.pointer path {
  fill: none;
  stroke: #000;
  stroke-width: 3.2;
}
.pointer text {
  font-size: 30px;
  fill: #000;
}
.tools {
  position: absolute;
  left: 23px;
  top: 715px;
  display: flex;
  gap: 103px;
}
.tools svg {
  border-radius: 50%;
  background: rgba(234, 234, 234, 0.85);
}
.tools path {
  fill: none;
  stroke: #5c5c5c;
  stroke-width: 3.5;
}
.dates {
  height: 78px;
  background: linear-gradient(#ededed, #f7f7f7 45%, #fbfbfb);
}
.dates text {
  font-size: 35px;
  fill: #888;
}
.dates .first {
  fill: #666;
}
.dates .faded {
  fill: #bcbcbc;
}

/* sub charts */
.sub {
  position: relative;
  box-sizing: border-box;
}
.plot {
  position: absolute;
  left: 0;
  top: 0;
}
.macd {
  height: 291px;
}
.boll {
  height: 105px;
}
.row {
  position: relative;
  display: flex;
  align-items: center;
  height: 48px;
  padding: 13px 0 0 24px;
}
.boll .row {
  padding-top: 12px;
}
.sub .select {
  width: 300px;
  height: 48px;
  padding: 0 16px 0 12px;
}
.boll .select {
  width: 240px;
}
.sub .help {
  margin-left: 8px;
}
.macd-v {
  margin-left: 16px;
  color: #3a9a2c;
}
.diff-v {
  margin-left: 10px;
}
.link {
  margin-left: 17px;
  color: #4b90d9;
}
.mid-v {
  margin: -10px 0 0 16px;
  color: #4b90d9;
}
.upper-v {
  margin: -10px 0 0 21px;
  color: #cf3a3e;
}
.boll .link {
  margin-top: -10px;
}
.second {
  position: relative;
  margin: -1px 0 0 24px;
}
.dea {
  color: #e07a45;
}
.lower {
  margin-top: -6px;
  color: #109010;
}

/* bottom bar */
.bottom {
  position: relative;
  display: flex;
  flex-direction: column;
  align-items: center;
  height: 208px;
  background: #252525;
  color: #dedede;
}
.actions {
  display: grid;
  grid-template-columns: repeat(3, 360px);
  height: 172px;
}
.action {
  display: flex;
  flex-direction: column;
  align-items: center;
  gap: 13px;
  padding-top: 26px;
}
.home {
  width: 405px;
  height: 10px;
  border-radius: 5px;
  background: #929292;
}
</style>
